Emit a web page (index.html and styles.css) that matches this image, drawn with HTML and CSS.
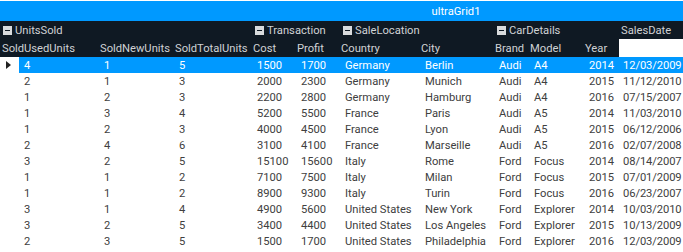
FILE: index.html
```html
<!DOCTYPE html>
<html>
<head>
<meta charset="utf-8">
<link rel="stylesheet" href="styles.css">
</head>
<body>
<div class="grid">
  <div class="caption">ultraGrid1</div>
  <div class="head">
    <div class="bands">
      <div class="band"><span class="minus"></span>UnitsSold</div>
      <div class="band"><span class="minus"></span>Transaction</div>
      <div class="band"><span class="minus"></span>SaleLocation</div>
      <div class="band"><span class="minus"></span>CarDetails</div>
      <div class="band plain">SalesDate</div>
    </div>
    <div class="cols">
      <div class="col">SoldUsedUnits</div>
      <div class="col">SoldNewUnits</div>
      <div class="col">SoldTotalUnits</div>
      <div class="col">Cost</div>
      <div class="col">Profit</div>
      <div class="col">Country</div>
      <div class="col">City</div>
      <div class="col">Brand</div>
      <div class="col">Model</div>
      <div class="col">Year</div>
      <div class="col blank"></div>
    </div>
  </div>
  <div class="body">
    <div class="row selected"><div class="sel"><span class="arrow"></span></div><div class="c">4</div><div class="c">1</div><div class="c">5</div><div class="c">1500</div><div class="c">1700</div><div class="c">Germany</div><div class="c">Berlin</div><div class="c">Audi</div><div class="c">A4</div><div class="c">2014</div><div class="c date">12/03/2009</div></div>
    <div class="row"><div class="sel"></div><div class="c">2</div><div class="c">1</div><div class="c">3</div><div class="c">2000</div><div class="c">2300</div><div class="c">Germany</div><div class="c">Munich</div><div class="c">Audi</div><div class="c">A4</div><div class="c">2015</div><div class="c date">11/12/2010</div></div>
    <div class="row"><div class="sel"></div><div class="c">1</div><div class="c">2</div><div class="c">3</div><div class="c">2200</div><div class="c">2800</div><div class="c">Germany</div><div class="c">Hamburg</div><div class="c">Audi</div><div class="c">A4</div><div class="c">2016</div><div class="c date">07/15/2007</div></div>
    <div class="row"><div class="sel"></div><div class="c">1</div><div class="c">3</div><div class="c">4</div><div class="c">5200</div><div class="c">5500</div><div class="c">France</div><div class="c">Paris</div><div class="c">Audi</div><div class="c">A5</div><div class="c">2014</div><div class="c date">11/03/2010</div></div>
    <div class="row"><div class="sel"></div><div class="c">1</div><div class="c">2</div><div class="c">3</div><div class="c">4000</div><div class="c">4500</div><div class="c">France</div><div class="c">Lyon</div><div class="c">Audi</div><div class="c">A5</div><div class="c">2015</div><div class="c date">06/12/2006</div></div>
    <div class="row"><div class="sel"></div><div class="c">2</div><div class="c">4</div><div class="c">6</div><div class="c">3100</div><div class="c">4100</div><div class="c">France</div><div class="c">Marseille</div><div class="c">Audi</div><div class="c">A5</div><div class="c">2016</div><div class="c date">02/07/2008</div></div>
    <div class="row"><div class="sel"></div><div class="c">3</div><div class="c">2</div><div class="c">5</div><div class="c">15100</div><div class="c">15600</div><div class="c">Italy</div><div class="c">Rome</div><div class="c">Ford</div><div class="c">Focus</div><div class="c">2014</div><div class="c date">08/14/2007</div></div>
    <div class="row"><div class="sel"></div><div class="c">1</div><div class="c">1</div><div class="c">2</div><div class="c">7100</div><div class="c">7500</div><div class="c">Italy</div><div class="c">Milan</div><div class="c">Ford</div><div class="c">Focus</div><div class="c">2015</div><div class="c date">07/01/2009</div></div>
    <div class="row"><div class="sel"></div><div class="c">1</div><div class="c">1</div><div class="c">2</div><div class="c">8900</div><div class="c">9300</div><div class="c">Italy</div><div class="c">Turin</div><div class="c">Ford</div><div class="c">Focus</div><div class="c">2016</div><div class="c date">06/23/2007</div></div>
    <div class="row"><div class="sel"></div><div class="c">3</div><div class="c">1</div><div class="c">4</div><div class="c">4900</div><div class="c">5600</div><div class="c">United States</div><div class="c">New York</div><div class="c">Ford</div><div class="c">Explorer</div><div class="c">2014</div><div class="c date">10/03/2010</div></div>
    <div class="row"><div class="sel"></div><div class="c">3</div><div class="c">2</div><div class="c">5</div><div class="c">3400</div><div class="c">4400</div><div class="c">United States</div><div class="c">Los Angeles</div><div class="c">Ford</div><div class="c">Explorer</div><div class="c">2015</div><div class="c date">10/13/2009</div></div>
    <div class="row"><div class="sel"></div><div class="c">2</div><div class="c">3</div><div class="c">5</div><div class="c">1500</div><div class="c">1700</div><div class="c">United States</div><div class="c">Philadelphia</div><div class="c">Ford</div><div class="c">Explorer</div><div class="c">2016</div><div class="c date">12/03/2009</div></div>
  </div>
</div>
</body>
</html>
```

FILE: styles.css
```css
html, body {
  margin: 0;
  padding: 0;
  background: #ffffff;
  overflow: hidden;
}
.grid {
  width: 683px;
  font-family: "Roboto", "Liberation Sans", sans-serif;
  font-size: 11.2px;
  padding-top: 1px;
}
.caption {
  height: 20px;
  background: #0099ff;
  color: #ffffff;
  display: flex;
  align-items: center;
  justify-content: center;
  padding-left: 229px;
  box-sizing: border-box;
}
.head {
  background: #0f1923;
  color: #cfd2d5;
}
.bands {
  display: grid;
  grid-template-columns: 252px 88px 154px 125px 64px;
  height: 18px;
}
.band {
  display: flex;
  align-items: center;
  padding-left: 3px;
  gap: 3px;
  white-space: nowrap;
}
.band.plain {
  padding-left: 2px;
}
.minus {
  width: 9px;
  height: 9px;
  background: #d9dbdd;
  position: relative;
  flex: none;
}
.minus::after {
  content: "";
  position: absolute;
  left: 2px;
  right: 2px;
  top: 4px;
  height: 1px;
  background: #0f1923;
}
.cols {
  display: grid;
  grid-template-columns: 99px 75px 78px 44px 44px 80px 74px 35px 55px 35px 64px;
  height: 18px;
}
.col {
  display: flex;
  align-items: center;
  padding-left: 1px;
  white-space: nowrap;
  overflow: hidden;
}
.col:first-child {
  padding-left: 2px;
}
.col.blank {
  background: #ffffff;
}
.row {
  display: grid;
  grid-template-columns: 19px 80px 75px 78px 44px 44px 80px 74px 35px 55px 35px 64px;
  height: 16px;
  color: #404040;
}
.c {
  display: flex;
  align-items: center;
  padding-left: 5px;
  white-space: nowrap;
  overflow: hidden;
}
.c.date {
  padding-left: 4px;
  letter-spacing: -0.1px;
}
.row.selected .c {
  background: #0099ff;
  color: #ffffff;
}
.sel {
  display: flex;
  align-items: center;
  padding-left: 6px;
}
.arrow {
  width: 0;
  height: 0;
  border-top: 4.5px solid transparent;
  border-bottom: 4.5px solid transparent;
  border-left: 5px solid #222222;
}
```
